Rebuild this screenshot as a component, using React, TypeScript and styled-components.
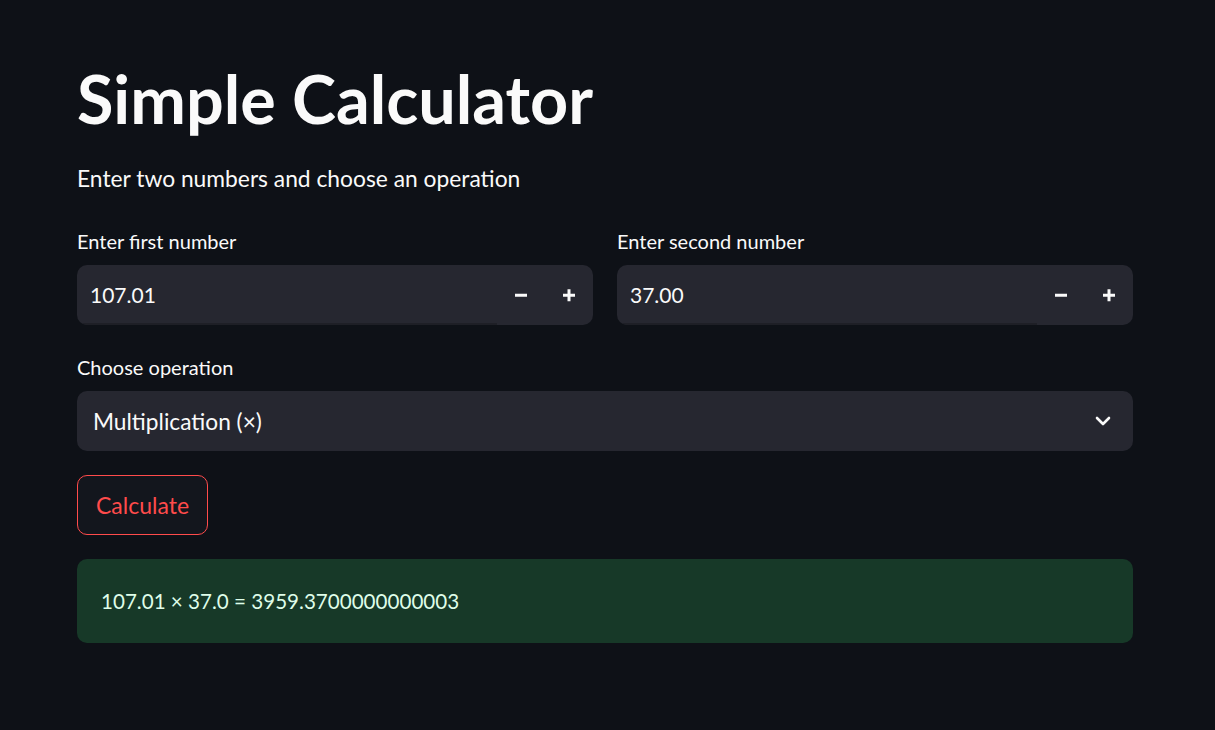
import React from "react";
import styled, { createGlobalStyle } from "styled-components";

const Global = createGlobalStyle`
  html, body { margin: 0; padding: 0; background: #0e1117; }
  body { font-family: "Lato", "Noto Sans", sans-serif; color: #fafafa; }
  * { box-sizing: border-box; }
`;

const Page = styled.div`
  min-height: 730px;
  background: #0e1117;
  padding: 60px 82px 0 77px;
  display: flex;
  flex-direction: column;
`;

const Title = styled.h1`
  margin: 0;
  font-size: 66.5px;
  font-weight: 700;
  line-height: 76px;
  letter-spacing: 0;
  color: #fafafa;
`;

const Subtitle = styled.p`
  margin: 27px 0 0;
  font-size: 22.8px;
  line-height: 30px;
  color: #fafafa;
`;

const Row = styled.div`
  display: grid;
  grid-template-columns: 1fr 1fr;
  gap: 24px;
  margin-top: 36px;
`;

const Field = styled.div`
  display: flex;
  flex-direction: column;
`;

const Label = styled.label`
  font-size: 20px;
  line-height: 24px;
  margin-bottom: 12px;
  color: #fafafa;
`;

const NumberBox = styled.div`
  display: flex;
  height: 60px;
  background: #262730;
  border-radius: 10px;
  overflow: hidden;
`;

const NumberInput = styled.div`
  flex: 1;
  display: flex;
  align-items: center;
  padding-left: 13px;
  font-size: 21px;
  border-bottom: 2px solid #1e1f26;
`;

const Stepper = styled.button`
  width: 48px;
  border: none;
  background: transparent;
  color: #fafafa;
  display: flex;
  align-items: center;
  justify-content: center;
  padding: 0;
  cursor: pointer;
`;

const SelectBlock = styled.div`
  display: flex;
  flex-direction: column;
  margin-top: 30px;
`;

const SelectBox = styled.div`
  height: 60px;
  background: #262730;
  border-radius: 10px;
  display: flex;
  align-items: center;
  justify-content: space-between;
  padding: 0 21px 0 16px;
  font-size: 22.7px;
`;

const Button = styled.button`
  align-self: flex-start;
  margin-top: 24px;
  height: 60px;
  padding: 0 18px;
  border: 1px solid #ff4b4b;
  border-radius: 10px;
  background: #13161d;
  color: #ff4b4b;
  font-family: inherit;
  font-size: 23px;
  cursor: pointer;
`;

const Alert = styled.div`
  margin-top: 24px;
  height: 84px;
  border-radius: 10px;
  background: #173928;
  color: #dffde9;
  display: flex;
  align-items: center;
  padding: 0 24px;
  font-size: 20.6px;
`;

const Minus = () => (
  <svg width="14" height="14" viewBox="0 0 14 14">
    <rect x="1" y="5.75" width="12" height="3" fill="#fafafa" />
  </svg>
);
const Plus = () => (
  <svg width="14" height="14" viewBox="0 0 14 14">
    <rect x="1" y="5.75" width="12" height="3" fill="#fafafa" />
    <rect x="5.5" y="1.25" width="3" height="12" fill="#fafafa" />
  </svg>
);
const Chevron = () => (
  <svg width="18" height="12" viewBox="0 0 18 12">
    <path d="M3 3 L9 9 L15 3" stroke="#fafafa" strokeWidth="2.6" fill="none" strokeLinecap="round" strokeLinejoin="round" />
  </svg>
);

const NumberField = ({ label, value }: { label: string; value: string }) => (
  <Field>
    <Label>{label}</Label>
    <NumberBox>
      <NumberInput>{value}</NumberInput>
      <Stepper><Minus /></Stepper>
      <Stepper><Plus /></Stepper>
    </NumberBox>
  </Field>
);

export default function App() {
  return (
    <>
      <Global />
      <Page>
        <Title>Simple Calculator</Title>
        <Subtitle>Enter two numbers and choose an operation</Subtitle>
        <Row>
          <NumberField label="Enter first number" value="107.01" />
          <NumberField label="Enter second number" value="37.00" />
        </Row>
        <SelectBlock>
          <Label>Choose operation</Label>
          <SelectBox>
            <span>Multiplication (×)</span>
            <Chevron />
          </SelectBox>
        </SelectBlock>
        <Button>Calculate</Button>
        <Alert>107.01 × 37.0 = 3959.3700000000003</Alert>
      </Page>
    </>
  );
}
